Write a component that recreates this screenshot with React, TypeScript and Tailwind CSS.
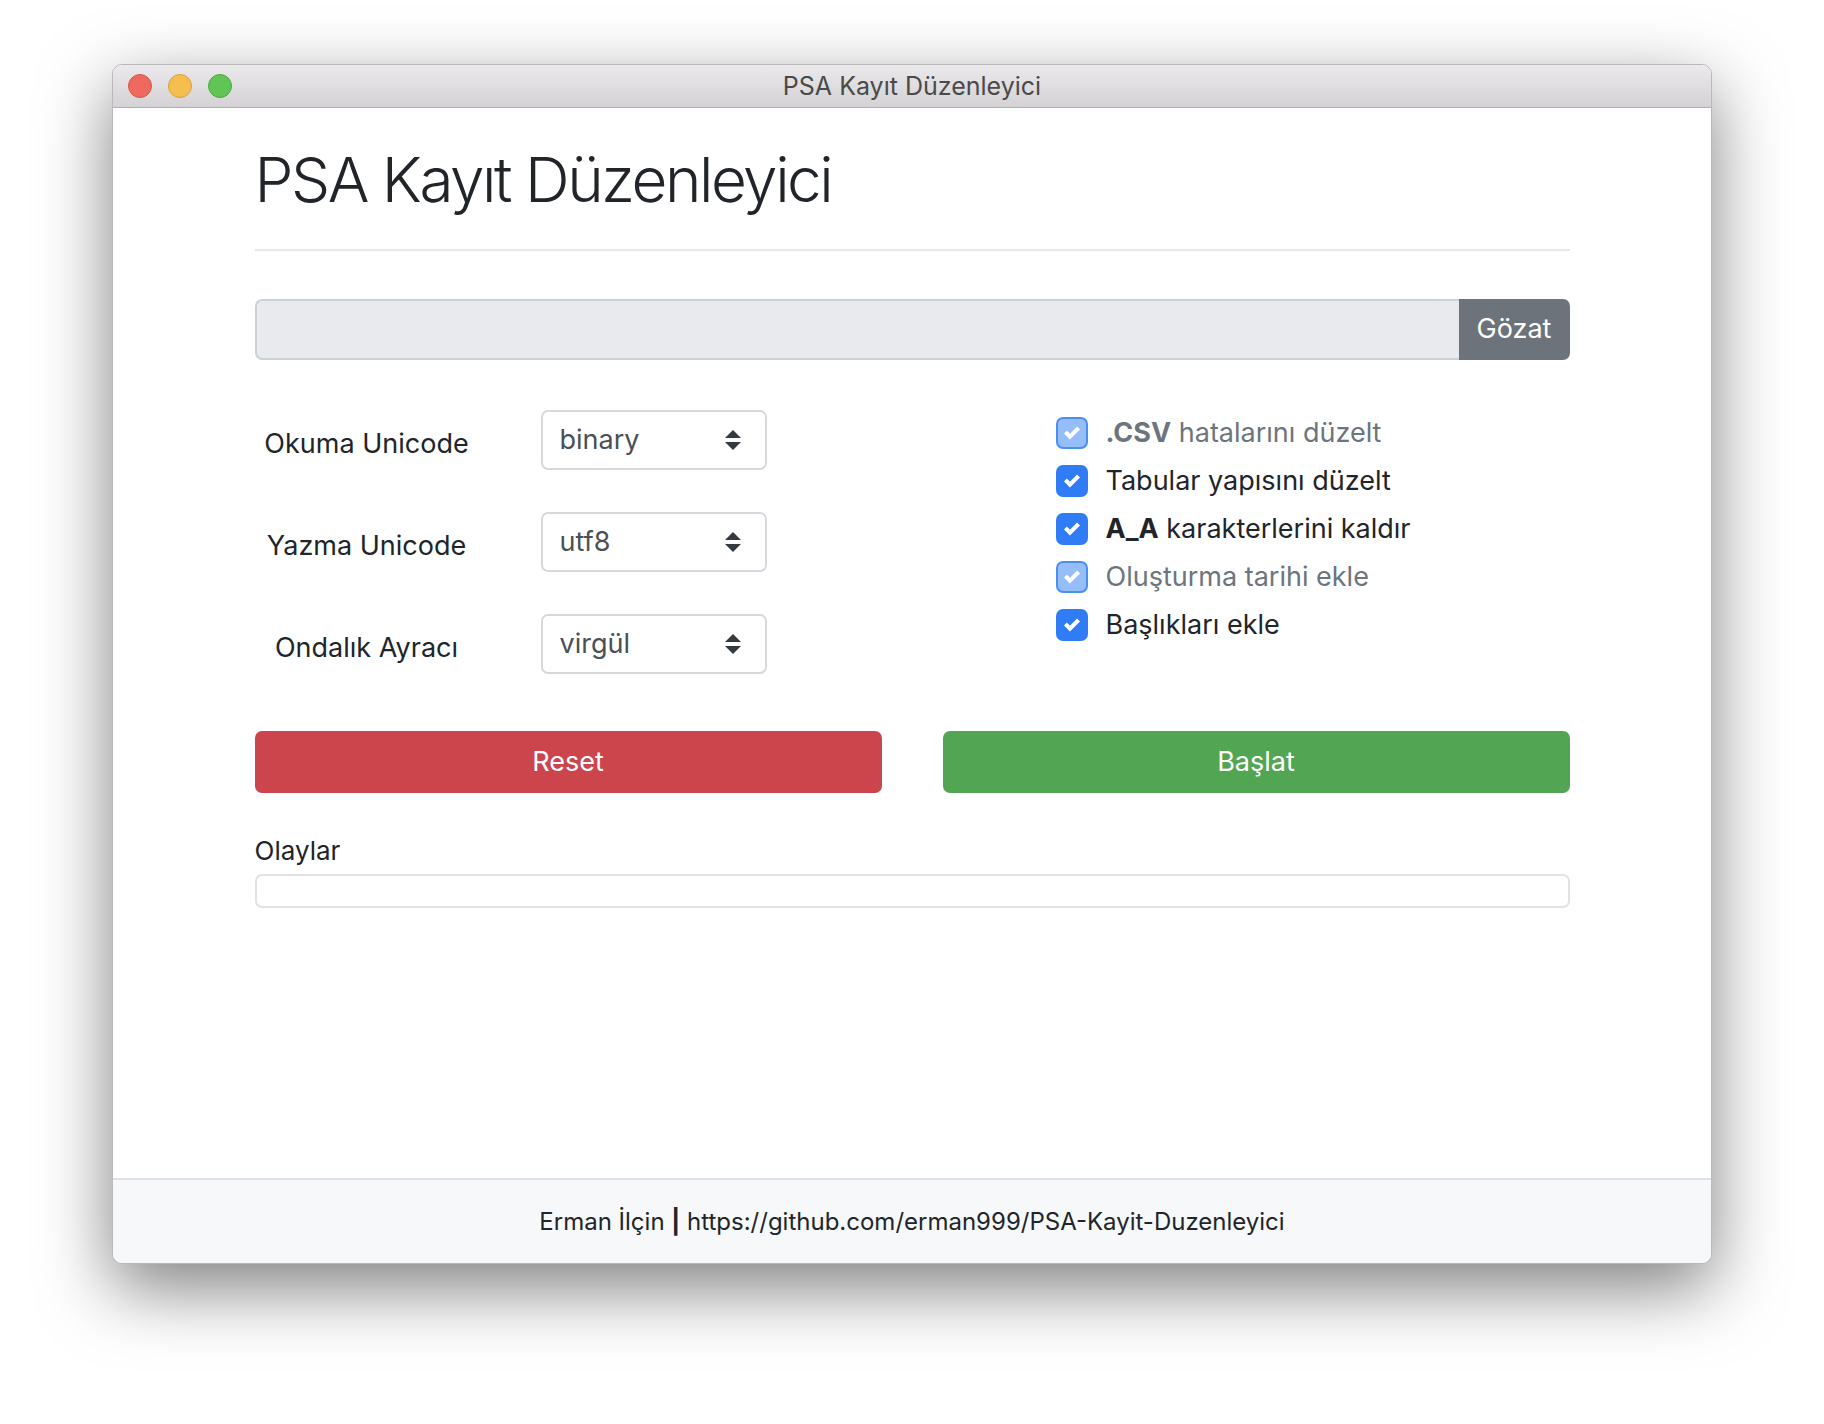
import React from "react";

const font = { fontFamily: "Inter, 'Noto Sans', sans-serif" };

function Check() {
  return (
    <svg viewBox="0 0 8 8" className="w-[16px] h-[16px]" fill="#ffffff">
      <path d="M6.564.75l-3.59 3.612-1.538-1.55L0 4.26 2.974 7.25 8 2.193z" />
    </svg>
  );
}

function Arrows() {
  return (
    <svg viewBox="0 0 4 5" className="w-[16px] h-[20px]" fill="#343a40">
      <path d="M2 0L0 2h4zm0 5L0 3h4z" />
    </svg>
  );
}

function Select({ value }: { value: string }) {
  return (
    <div className="w-[226px] h-[60px] border-2 border-[#d5d9de] rounded-[7px] bg-white flex items-center justify-between pl-[17px] pr-[24px]">
      <span className="text-[27px] text-[#495057] leading-none -mt-[2px]">{value}</span>
      <Arrows />
    </div>
  );
}

function Box({ disabled }: { disabled?: boolean }) {
  return (
    <div
      className={
        disabled
          ? "w-[32px] h-[32px] rounded-[7px] bg-[#95bdf9] border-2 border-[#4a8ff6] flex items-center justify-center shrink-0"
          : "w-[32px] h-[32px] rounded-[7px] bg-[#2f7cf6] flex items-center justify-center shrink-0"
      }
    >
      <Check />
    </div>
  );
}

export default function App() {
  const rows = [
    { label: "Okuma Unicode", value: "binary" },
    { label: "Yazma Unicode", value: "utf8" },
    { label: "Ondalık Ayracı", value: "virgül" },
  ];
  return (
    <div className="w-[1824px] h-[1424px] bg-white pt-[64px] pl-[112px]" style={font}>
      <div className="w-[1600px] h-[1200px] rounded-[10px] bg-white flex flex-col overflow-hidden border border-[#b9b9b9] shadow-[0_24px_70px_rgba(0,0,0,0.5)]">
        {/* title bar */}
        <div className="h-[43px] shrink-0 relative flex items-center justify-center bg-gradient-to-b from-[#ebe9eb] to-[#d4d2d4] border-b border-[#b1afb1]">
          <div className="absolute left-[15px] top-[9px] flex gap-[16px]">
            <div className="w-[24px] h-[24px] rounded-full bg-[#ef6a5e] border border-[#d8564a]" />
            <div className="w-[24px] h-[24px] rounded-full bg-[#f6be4f] border border-[#d9a13a]" />
            <div className="w-[24px] h-[24px] rounded-full bg-[#61c555] border border-[#4ca83f]" />
          </div>
          <span className="text-[25px] text-[#4a4a4a] leading-none">PSA Kayıt Düzenleyici</span>
        </div>

        {/* content */}
        <div className="flex-1 w-[1315px] mx-auto">
          <h1 className="mt-[35px] text-[62px] leading-[74px] font-light text-[#212529] tracking-[-0.04em]">
            PSA Kayıt Düzenleyici
          </h1>
          <div className="mt-[32px] h-[2px] bg-[#e6e7e9]" />

          <div className="mt-[48px] flex h-[61px]">
            <div className="flex-1 bg-[#e9eaee] border-2 border-r-0 border-[#ccd1d8] rounded-l-[7px]" />
            <div className="w-[111px] bg-[#6c737b] rounded-r-[7px] flex items-center justify-center text-white text-[27px]">
              Gözat
            </div>
          </div>

          <div className="mt-[50px] flex">
            <div className="w-[687px] flex flex-col gap-[42px]">
              {rows.map((r) => (
                <div key={r.label} className="flex items-center">
                  <div className="w-[224px] text-center text-[27px] text-[#212529] mt-[8px]">{r.label}</div>
                  <div className="ml-[62px]">
                    <Select value={r.value} />
                  </div>
                </div>
              ))}
            </div>
            <div className="ml-[114px] mt-[7px] flex flex-col gap-[16px] text-[27px]">
              <div className="flex items-center gap-[18px] h-[32px]">
                <Box disabled />
                <span className="text-[#6c757d]">
                  <b className="font-bold">.CSV</b> hatalarını düzelt
                </span>
              </div>
              <div className="flex items-center gap-[18px] h-[32px]">
                <Box />
                <span className="text-[#212529]">Tabular yapısını düzelt</span>
              </div>
              <div className="flex items-center gap-[18px] h-[32px]">
                <Box />
                <span className="text-[#212529]">
                  <b className="font-bold">A_A</b> karakterlerini kaldır
                </span>
              </div>
              <div className="flex items-center gap-[18px] h-[32px]">
                <Box disabled />
                <span className="text-[#6c757d]">Oluşturma tarihi ekle</span>
              </div>
              <div className="flex items-center gap-[18px] h-[32px]">
                <Box />
                <span className="text-[#212529]">Başlıkları ekle</span>
              </div>
            </div>
          </div>

          <div className="mt-[57px] flex gap-[61px]">
            <div className="flex-1 h-[62px] rounded-[7px] bg-[#cc444c] text-white text-[27px] flex items-center justify-center">
              Reset
            </div>
            <div className="flex-1 h-[62px] rounded-[7px] bg-[#52a552] text-white text-[27px] flex items-center justify-center">
              Başlat
            </div>
          </div>

          <div className="mt-[40px] text-[26px] leading-[36px] text-[#212529]">Olaylar</div>
          <div className="mt-[5px] h-[34px] border-2 border-[#dfe2e6] rounded-[7px] bg-white" />
        </div>

        {/* footer */}
        <div className="h-[85px] shrink-0 border-t-2 border-[#dfe2e6] bg-[#f7f8fa] flex items-center justify-center">
          <span className="text-[24px] text-[#212529]">
            Erman İlçin <b className="font-bold">|</b> https://github.com/erman999/PSA-Kayit-Duzenleyici
          </span>
        </div>
      </div>
    </div>
  );
}
